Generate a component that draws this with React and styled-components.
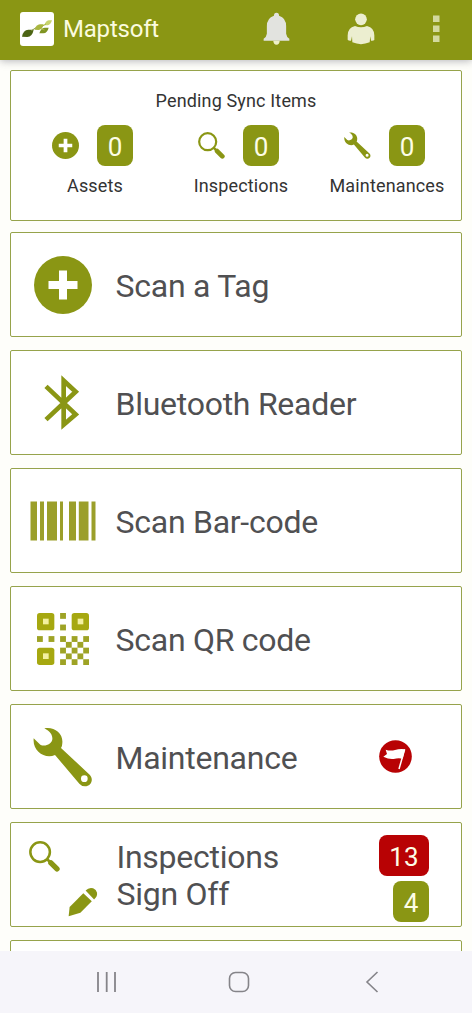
import React from "react";
import styled, { createGlobalStyle } from "styled-components";

const GREEN = "#8a9614";
const RED = "#b80204";

const GlobalStyle = createGlobalStyle`
  * { box-sizing: border-box; }
  body { margin: 0; background: #fefefa; font-family: Roboto, "Liberation Sans", sans-serif; }
  svg { display: block; flex: none; }
`;

const Screen = styled.div`
  display: flex;
  flex-direction: column;
  width: 472px;
  height: 1013px;
  overflow: hidden;
`;

const Header = styled.header`
  display: flex;
  align-items: center;
  flex: none;
  height: 60px;
  padding: 0 32px 3px 20px;
  background: ${GREEN};
  box-shadow: 0 1px 8px rgba(60, 60, 80, 0.38);
`;

const AppName = styled.h1`
  flex: 1;
  margin: 0 0 0 9px;
  font-size: 24px;
  font-weight: 400;
  line-height: 30px;
  letter-spacing: -0.2px;
  color: #fbfbdf;
`;

const Actions = styled.div`
  display: flex;
  align-items: center;
  gap: 57px;
`;

const Content = styled.main`
  display: flex;
  flex-direction: column;
  flex: 1;
  min-height: 0;
  overflow: hidden;
  padding: 10px 10px 0;
`;

const Card = styled.section`
  flex: none;
  background: #fff;
  border: 1px solid #96a34b;
  border-radius: 2px;
`;

const SyncCard = styled(Card)`
  height: 151px;
  margin-bottom: 11px;
  padding: 19px 0 0 11px;
`;

const SyncTitle = styled.h2`
  margin: 0 11px 0 0;
  font-size: 18px;
  font-weight: 400;
  line-height: 22px;
  letter-spacing: 0.15px;
  text-align: center;
  color: #333;
`;

const SyncGrid = styled.div`
  display: grid;
  grid-template-columns: repeat(3, 146px);
  margin-top: 13px;
`;

const SyncItem = styled.div`
  display: flex;
  flex-direction: column;
`;

const SyncStatus = styled.div`
  display: flex;
  align-items: center;
  gap: 18px;
  padding-left: 30px;
`;

const SyncLabel = styled.div`
  margin-top: 9px;
  font-size: 18px;
  line-height: 22px;
  letter-spacing: 0.15px;
  text-align: center;
  color: #333;
`;

const Badge = styled.span`
  display: flex;
  align-items: center;
  justify-content: center;
  min-width: 36px;
  height: 41px;
  padding: 3px 10.5px 0;
  border-radius: 8px;
  background: ${(p) => (p.$alert ? RED : GREEN)};
  color: #fdfde6;
  font-size: 26px;
  line-height: 30px;
`;

const MenuCard = styled(Card)`
  display: flex;
  align-items: center;
  height: 105px;
  margin-bottom: 13px;
  padding-right: 32px;
`;

const IconSlot = styled.div`
  display: flex;
  align-items: center;
  justify-content: center;
  flex: none;
  width: 104px;
  height: 100%;
`;

const IconPair = styled(IconSlot)`
  flex-direction: column;
  align-items: flex-start;
  justify-content: flex-start;
  gap: 15px;
  padding: 18px 0 0 18px;

  & > :last-child { margin-left: 39px; }
`;

const MenuLabel = styled.div`
  flex: 1;
  padding: 3px 0 0 ${(p) => (p.$double ? "1.5px" : "0.5px")};
  font-size: 32px;
  line-height: 37px;
  letter-spacing: -0.26px;
  color: #505052;
`;

const BadgeStack = styled.div`
  display: flex;
  flex-direction: column;
  align-items: flex-end;
  align-self: stretch;
  gap: 5px;
  padding-top: 12px;
`;

const FlagSlot = styled.div`
  margin: 0 17px 0 0;
`;

const NavBar = styled.nav`
  display: flex;
  align-items: center;
  flex: none;
  height: 62px;
  padding-left: 96px;
  background: #f6f5fa;
`;

const NavButton = styled.div`
  display: flex;
  width: ${(p) => p.$width};
`;

const Logo = () => (
  <svg width="34" height="34" viewBox="0 0 102 102">
    <rect width="102" height="102" rx="9" fill="#fff" />
    <path d="M6 74Q9 54 25 53H41Q37 74 22 75Z" fill="#4c6414" />
    <path d="M34 56L50 46" stroke="#8a9a45" strokeWidth="3" />
    <path d="M44 53Q48 38 60 37H71Q67 53 56 54Z" fill="#a9b63f" />
    <path d="M58 64Q62 49 74 47H86Q82 63 70 64Z" fill="#7f9422" />
    <path d="M73 40Q77 26 86 25H96Q92 39 83 40Z" fill="#c7d36c" />
    <path d="M66 43L78 36M62 50L74 54" stroke="#a9b63f" strokeWidth="3" />
  </svg>
);

const Bell = () => (
  <svg width="27" height="34" viewBox="0 0 84 102" preserveAspectRatio="none">
    <path d="M32 86H52Q51 98 42 98Q33 98 32 86Z" fill="#eef0c8" />
    <path d="M42 2Q50 2 50 11Q72 17 72 43V65Q73 74 82 80V86H2V80Q11 74 12 65V43Q12 17 34 11Q34 2 42 2Z" fill="#e2e3df" />
  </svg>
);

const Person = () => (
  <svg width="28" height="32" viewBox="0 0 84 96">
    <circle cx="42" cy="19" r="17.5" fill="#eceed0" />
    <path d="M24 39Q42 47 60 39Q83 44 82 70V81Q79 84 72 83L70 70L68 88Q42 99 16 88L15 70L12 83Q5 84 2 80V70Q1 44 24 39Z" fill="#eceed0" />
  </svg>
);

const More = () => (
  <svg width="8" height="28" viewBox="0 0 8 28" fill="#d3d99f">
    <rect x="1" y="0.5" width="6.5" height="6.5" />
    <rect x="1" y="10.5" width="6.5" height="6.5" />
    <rect x="1" y="20.5" width="6.5" height="6.5" />
  </svg>
);

const PlusCircle = ({ size }) => (
  <svg width={size} height={size} viewBox="0 0 58 58">
    <circle cx="29" cy="29" r="29" fill={GREEN} />
    <path d="M29 14.5V43.5M14.5 29H43.5" stroke="#fff" strokeWidth="8" />
  </svg>
);

const Magnifier = ({ size }) => (
  <svg width={size} height={size} viewBox="0 0 92 92" fill="none" stroke={GREEN}>
    <circle cx="33" cy="33" r="29" strokeWidth="7.5" />
    <path d="M54 54L66 66" strokeWidth="8" />
    <path d="M65 65L83 83" strokeWidth="16" strokeLinecap="round" />
  </svg>
);

const Wrench = ({ size }) => (
  <svg width={size} height={size} viewBox="0 0 180 180">
    <path
      fillRule="evenodd"
      fill={GREEN}
      d="M34 4C62 -2 91 18 88 48Q88 57 84 63L170 143C184 158 173 178 156 178Q146 178 139 170L66 84C36 97 -2 73 2 34L22 53C35 61 57 51 58 37C59 24 52 14 34 4ZM154 145A10 10 0 1 0 154 165A10 10 0 1 0 154 145Z"
    />
  </svg>
);

const Bluetooth = () => (
  <svg width="40" height="56" viewBox="0 0 120 168" fill="none" stroke={GREEN} strokeWidth="14">
    <path d="M9 34L98 118L62 149V17L98 50L9 134" />
  </svg>
);

const BARS = [[0.5, 6.5], [10, 4], [17, 10], [30, 3], [39, 7], [48.8, 9.7], [61.5, 4]];

const Barcode = () => (
  <svg width="66" height="40" viewBox="0 0 66 40" fill="#9b9f2a">
    {BARS.map(([x, w]) => (
      <rect key={x} x={x} y="0.5" width={w} height="39" />
    ))}
  </svg>
);

const QR_DOTS = [
  [4, 0], [4, 2], [0, 4], [2, 4], [4, 4], [6, 4], [8, 4],
  [5, 5], [7, 5], [4, 6], [6, 6], [8, 6], [5, 7], [7, 7], [4, 8], [6, 8], [8, 8],
];

const QrCode = () => (
  <svg width="52" height="52" viewBox="0 0 156 156">
    {[[0, 0], [104, 0], [0, 104]].map(([x, y]) => (
      <g key={`${x}-${y}`}>
        <rect x={x} y={y} width="52" height="52" rx="8" fill="#a6a810" />
        <rect x={x + 18} y={y + 17} width="17" height="17" fill="#f3f0a0" />
      </g>
    ))}
    {QR_DOTS.map(([x, y]) => (
      <rect key={`${x}-${y}`} x={x * 17.33} y={y * 17.33} width="17.5" height="17.5" fill="#9ea325" />
    ))}
  </svg>
);

const Pencil = () => (
  <svg width="30" height="30" viewBox="0 0 92 92" fill={GREEN}>
    <path d="M2 90L5 61L47 19L73 44L38 79Z" />
    <path d="M54 11Q64 0 77 4Q87 8 89 18Q91 29 80 38Z" />
  </svg>
);

const Flag = () => (
  <svg width="33" height="33" viewBox="0 0 99 99">
    <circle cx="49.5" cy="49.5" r="49" fill={RED} />
    <path d="M20 29Q34 34 48 30Q62 26 78 28L71 56Q58 53 44 57Q30 59 13 50L24 42Z" fill="#fff" />
    <path d="M77 28L60 87" stroke="#fff" strokeWidth="4.5" />
  </svg>
);

const Recents = () => (
  <svg width="22" height="22" viewBox="0 0 22 22" stroke="#858489" strokeWidth="1.8">
    <path d="M2 1V21M10.7 1V21M19 1V21" />
  </svg>
);

const Home = () => (
  <svg width="22" height="22" viewBox="0 0 22 22" fill="none" stroke="#858489" strokeWidth="1.6">
    <rect x="1.5" y="1.5" width="19" height="19" rx="6" />
  </svg>
);

const Back = () => (
  <svg width="14" height="22" viewBox="0 0 14 22" fill="none" stroke="#858489" strokeWidth="1.6">
    <path d="M12.5 1L2 11L12.5 21" />
  </svg>
);

const SYNC_ITEMS = [
  { label: "Assets", icon: <PlusCircle size={27} />, count: 0 },
  { label: "Inspections", icon: <Magnifier size={27} />, count: 0 },
  { label: "Maintenances", icon: <Wrench size={27} />, count: 0 },
];

const MENU = [
  { label: "Scan a Tag", icon: <PlusCircle size={58} /> },
  { label: "Bluetooth Reader", icon: <Bluetooth /> },
  { label: "Scan Bar-code", icon: <Barcode /> },
  { label: "Scan QR code", icon: <QrCode /> },
  { label: "Maintenance", icon: <Wrench size={60} />, flagged: true },
];

export default function App() {
  return (
    <Screen>
      <GlobalStyle />
      <Header>
        <Logo />
        <AppName>Maptsoft</AppName>
        <Actions>
          <Bell />
          <Person />
          <More />
        </Actions>
      </Header>
      <Content>
        <SyncCard>
          <SyncTitle>Pending Sync Items</SyncTitle>
          <SyncGrid>
            {SYNC_ITEMS.map(({ label, icon, count }) => (
              <SyncItem key={label}>
                <SyncStatus>
                  {icon}
                  <Badge>{count}</Badge>
                </SyncStatus>
                <SyncLabel>{label}</SyncLabel>
              </SyncItem>
            ))}
          </SyncGrid>
        </SyncCard>
        {MENU.map(({ label, icon, flagged }) => (
          <MenuCard key={label}>
            <IconSlot>{icon}</IconSlot>
            <MenuLabel>{label}</MenuLabel>
            {flagged && (
              <FlagSlot>
                <Flag />
              </FlagSlot>
            )}
          </MenuCard>
        ))}
        <MenuCard>
          <IconPair>
            <Magnifier size={31} />
            <Pencil />
          </IconPair>
          <MenuLabel $double>
            Inspections
            <br />
            Sign Off
          </MenuLabel>
          <BadgeStack>
            <Badge $alert>13</Badge>
            <Badge>4</Badge>
          </BadgeStack>
        </MenuCard>
        <MenuCard />
      </Content>
      <NavBar>
        <NavButton $width="132px">
          <Recents />
        </NavButton>
        <NavButton $width="137px">
          <Home />
        </NavButton>
        <NavButton $width="14px">
          <Back />
        </NavButton>
      </NavBar>
    </Screen>
  );
}
